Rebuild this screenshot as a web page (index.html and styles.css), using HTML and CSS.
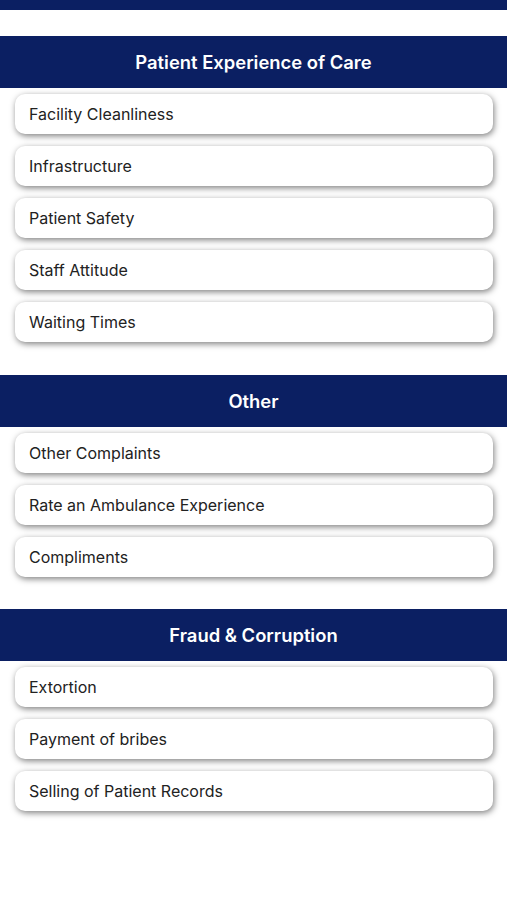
FILE: index.html
```html
<!DOCTYPE html>
<html lang="en">
<head>
    <meta charset="UTF-8">
    <meta name="viewport" content="width=device-width, initial-scale=1.0">
    <title>Complaint Categories</title>
    <link rel="stylesheet" href="styles.css">
</head>
<body>
    <div class="topbar"></div>

    <div class="section section-first">
        <h2 class="section-title">Patient Experience of Care</h2>
        <div class="list">
            <div class="item">Facility Cleanliness</div>
            <div class="item">Infrastructure</div>
            <div class="item">Patient Safety</div>
            <div class="item">Staff Attitude</div>
            <div class="item">Waiting Times</div>
        </div>
    </div>

    <div class="section">
        <h2 class="section-title">Other</h2>
        <div class="list">
            <div class="item">Other Complaints</div>
            <div class="item">Rate an Ambulance Experience</div>
            <div class="item">Compliments</div>
        </div>
    </div>

    <div class="section">
        <h2 class="section-title">Fraud &amp; Corruption</h2>
        <div class="list">
            <div class="item">Extortion</div>
            <div class="item">Payment of bribes</div>
            <div class="item">Selling of Patient Records</div>
        </div>
    </div>
</body>
</html>
```

FILE: styles.css
```css
body {
    margin: 0;
    font-family: Inter, "Noto Sans", sans-serif;
    background: white;
}
.topbar {
    height: 10px;
    background: #0b1f62;
    margin-bottom: 26px;
}
.section-title {
    margin: 0;
    height: 52px;
    display: flex;
    align-items: center;
    justify-content: center;
    background: #0b1f62;
    color: white;
    font-size: 18.4px;
    font-weight: 600;
}
.list {
    display: flex;
    flex-direction: column;
    gap: 12px;
    padding: 6px 14px 32px 15px;
}
.section-first .list {
    padding-bottom: 33px;
}
.item {
    height: 40px;
    display: flex;
    align-items: center;
    padding-left: 14px;
    background: white;
    border-radius: 10px;
    box-shadow: 1px 2px 6px rgba(0, 0, 0, 0.5);
    color: #222;
    font-size: 16px;
}
```
